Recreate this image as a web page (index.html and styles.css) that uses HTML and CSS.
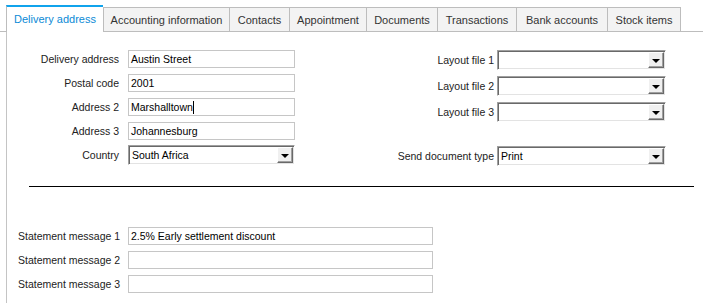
FILE: index.html
```html
<!DOCTYPE html>
<html>
<head>
<meta charset="utf-8">
<link rel="stylesheet" href="styles.css">
</head>
<body>
<div class="tabs">
  <div class="tab active" style="width:97px">Delivery address</div>
  <div class="tab" style="width:126px">Accounting information</div>
  <div class="tab" style="width:60px">Contacts</div>
  <div class="tab" style="width:77px">Appointment</div>
  <div class="tab" style="width:71px">Documents</div>
  <div class="tab" style="width:79px">Transactions</div>
  <div class="tab" style="width:91px">Bank accounts</div>
  <div class="tab last" style="width:74px">Stock items</div>
</div>
<div class="panel">
  <div class="top">
    <div class="grid left">
      <div class="label">Delivery address</div><div class="field">Austin Street</div>
      <div class="label">Postal code</div><div class="field">2001</div>
      <div class="label">Address 2</div><div class="field">Marshalltown<span class="caret"></span></div>
      <div class="label">Address 3</div><div class="field">Johannesburg</div>
      <div class="label">Country</div><div class="select"><span class="val">South Africa</span><span class="btn"><span class="tri"></span></span></div>
    </div>
    <div class="grid right">
      <div class="label">Layout file 1</div><div class="select"><span class="val"></span><span class="btn"><span class="tri"></span></span></div>
      <div class="label">Layout file 2</div><div class="select"><span class="val"></span><span class="btn"><span class="tri"></span></span></div>
      <div class="label">Layout file 3</div><div class="select"><span class="val"></span><span class="btn"><span class="tri"></span></span></div>
      <div class="label spacer"></div><div class="spacer"></div>
      <div class="label">Send document type</div><div class="select"><span class="val">Print</span><span class="btn"><span class="tri"></span></span></div>
    </div>
  </div>
  <div class="rule"></div>
  <div class="grid stmt">
    <div class="slabel">Statement message 1</div><div class="field">2.5% Early settlement discount</div>
    <div class="slabel">Statement message 2</div><div class="field"></div>
    <div class="slabel">Statement message 3</div><div class="field"></div>
  </div>
</div>
</body>
</html>
```
FILE: styles.css
```css
html, body {
  margin: 0;
  padding: 0;
  background: #ffffff;
  font-family: "Liberation Sans", Arial, sans-serif;
  font-size: 10.5px;
  color: #222222;
  width: 703px;
  height: 303px;
  overflow: hidden;
}

.tabs {
  display: flex;
  align-items: flex-end;
  height: 26px;
  padding-top: 5px;
  padding-left: 6px;
  border-bottom: 1px solid #bdbdbd;
}

.tab {
  box-sizing: border-box;
  height: 24px;
  border-top: 1px solid #bdbdbd;
  border-left: 1px solid #bdbdbd;
  background: #f3f3f3;
  color: #333333;
  display: flex;
  align-items: center;
  justify-content: center;
  font-size: 11px;
}

.tab.last {
  border-right: 1px solid #bdbdbd;
}

.tab.active {
  height: 27px;
  margin-bottom: -1px;
  border-top: 2px solid #10a3ec;
  border-left: 1px solid #bdbdbd;
  background: #ffffff;
  color: #0b8ad6;
  padding-bottom: 1px;
}

.panel {
  margin-left: 6px;
  border-left: 1px solid #c4c4c4;
  height: 271px;
}

.top {
  display: flex;
  padding-top: 18px;
  padding-right: 37px;
}

.grid {
  display: grid;
  align-items: center;
}

.left {
  grid-template-columns: 112px 167px;
  grid-auto-rows: 18px;
  column-gap: 9px;
  row-gap: 6px;
}

.right {
  margin-left: auto;
  grid-template-columns: auto 169px;
  grid-template-rows: 20px 20px 20px 12px 20px;
  column-gap: 3px;
  row-gap: 6px;
}

.label {
  text-align: right;
  white-space: nowrap;
}

.field {
  box-sizing: border-box;
  height: 18px;
  border: 1px solid #c6c6c6;
  padding-left: 2px;
  line-height: 16px;
  color: #000000;
  white-space: nowrap;
  overflow: hidden;
}

.caret {
  display: inline-block;
  width: 1px;
  height: 13px;
  background: #000000;
  vertical-align: -3px;
}

.select {
  box-sizing: border-box;
  height: 20px;
  border-top: 1px solid #a0a0a0;
  border-left: 1px solid #a0a0a0;
  border-right: 1px solid #ffffff;
  border-bottom: 1px solid #ffffff;
  box-shadow: inset 1px 1px 0 #696969, inset -1px -1px 0 #e3e3e3;
  display: flex;
  align-items: stretch;
  padding: 1px;
  background: #ffffff;
  color: #000000;
}

.select .val {
  flex: 1;
  padding-left: 2px;
  line-height: 16px;
}

.select .btn {
  box-sizing: border-box;
  width: 16px;
  background: #f0f0f0;
  border-top: 1px solid #ffffff;
  border-left: 1px solid #ffffff;
  border-right: 1px solid #696969;
  border-bottom: 1px solid #696969;
  box-shadow: inset -1px -1px 0 #a0a0a0;
  display: flex;
  align-items: center;
  justify-content: center;
}

.tri {
  width: 0;
  height: 0;
  border-left: 4px solid transparent;
  border-right: 4px solid transparent;
  border-top: 4px solid #000000;
  margin-top: 1px;
}

.rule {
  margin-top: 20px;
  margin-left: 22px;
  margin-right: 9px;
  height: 1px;
  background: #000000;
}

.stmt {
  margin-top: 40px;
  padding-left: 11px;
  grid-template-columns: 101px 305px;
  grid-auto-rows: 18px;
  column-gap: 9px;
  row-gap: 6px;
}

.slabel {
  white-space: nowrap;
}
```
